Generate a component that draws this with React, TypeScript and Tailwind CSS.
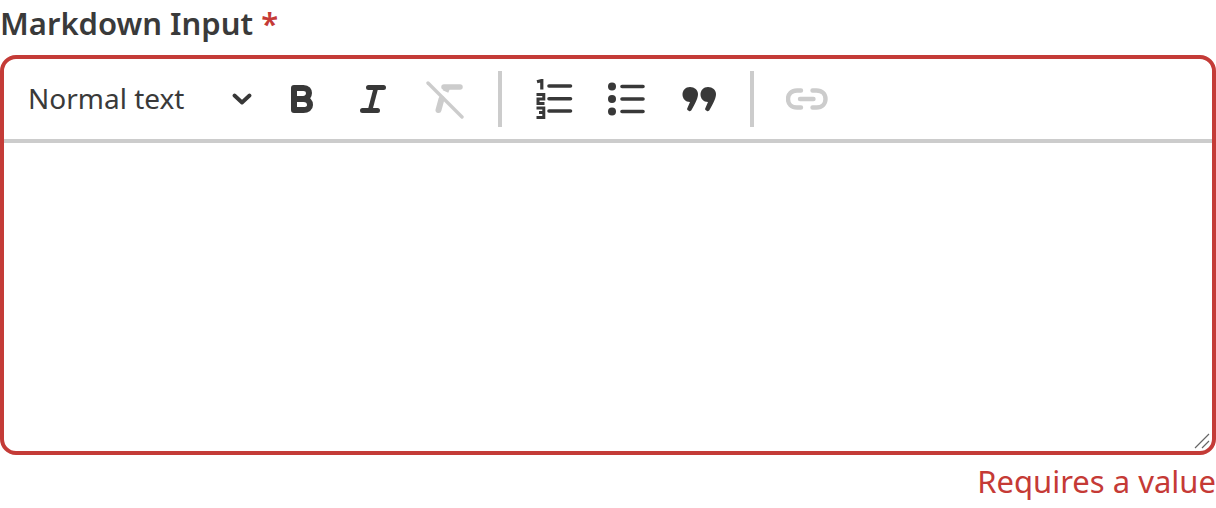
export default function App() {
  const dark = "#383838";
  const light = "#cccccc";
  return (
    <div className="w-[1216px] h-[508px] bg-white overflow-hidden font-['Noto_Sans',sans-serif]">
      <div className="h-[55px] flex items-start text-[31px] leading-[47px] font-semibold text-[#3a3a3a] whitespace-pre">
        Markdown Input <span className="text-[#c53a36]">*</span>
      </div>
      <div className="relative h-[400px] border-4 border-[#c43b37] rounded-2xl flex flex-col">
        <div className="h-[80px] flex items-center">
          <div className="w-[262px] pl-[24px] pr-[14px] flex items-center justify-between text-[28px] leading-[38px] text-[#3a3a3a]">
            <span className="-mt-[2px]">Normal text</span>
            <svg width="20" height="12" viewBox="0 0 20 12" fill="none">
              <path d="M2.5 2.5 L10 9.5 L17.5 2.5" stroke={dark} strokeWidth="3.8" strokeLinecap="round" strokeLinejoin="round" />
            </svg>
          </div>
          <div className="w-[72px] flex justify-center">
            <svg width="22" height="28" viewBox="0 0 22 28" fill="none">
              <path d="M3 3 H12.5 C16.5 3 18 5.5 18 8 C18 11 16 13.5 12.5 14 C17 14 19 17 19 20 C19 23 16.5 25 12.5 25 H3 Z M3 14 H12.5" stroke={dark} strokeWidth="6" strokeLinejoin="round" />
            </svg>
          </div>
          <div className="w-[72px] flex justify-center">
            <svg width="26" height="28" viewBox="0 0 26 28" fill="none" className="-ml-[3px]">
              <path d="M8.5 2.5 H23.5 M2.5 25.5 H17.5" stroke={dark} strokeWidth="5" strokeLinecap="round" />
              <path d="M16 2.5 L10 25.5" stroke={dark} strokeWidth="4.6" />
            </svg>
          </div>
          <div className="w-[72px] flex justify-center">
            <svg width="38" height="38" viewBox="0 0 38 38" fill="none" className="mt-[2px] -ml-[2px]">
              <path d="M2 2 L36 36" stroke={light} strokeWidth="3.4" strokeLinecap="round" />
              <path d="M18 6 H34" stroke={light} strokeWidth="5.5" strokeLinecap="round" />
              <path d="M21 7 L19.5 10.5" stroke={light} strokeWidth="6" />
              <path d="M15.5 18 L12.5 29" stroke={light} strokeWidth="6" strokeLinecap="round" />
            </svg>
          </div>
          <div className="w-1 h-[56px] bg-[#cccccc] ml-[16px]" />
          <div className="ml-[34px] w-[38px] flex">
            <svg width="38" height="40" viewBox="0 0 38 40" fill="none">
              <path d="M13 7 H34.5 M13 19.7 H34.5 M13 32 H34.5" stroke={dark} strokeWidth="3.6" strokeLinecap="round" />
              <path d="M1 2.8 L5.8 1.5 V10.5" stroke={dark} strokeWidth="3.2" />
              <path d="M0.5 15.5 H7.8 V20 H2 V24.5 H8.5" stroke={dark} strokeWidth="3" />
              <path d="M0.5 29 H7.8 V33.5 H3 M7.8 33.5 V38.5 H0.5" stroke={dark} strokeWidth="3" />
            </svg>
          </div>
          <div className="ml-[33px] w-[38px] flex">
            <svg width="38" height="34" viewBox="0 0 38 34" fill="none">
              <circle cx="5" cy="4.5" r="4" fill={dark} />
              <circle cx="5" cy="17" r="4" fill={dark} />
              <circle cx="5" cy="29.5" r="4" fill={dark} />
              <path d="M15 4.5 H36 M15 17 H36 M15 29.5 H36" stroke={dark} strokeWidth="3.6" strokeLinecap="round" />
            </svg>
          </div>
          <div className="ml-[37px] w-[36px] flex">
            <svg width="36" height="26" viewBox="0 0 36 26" fill={dark}>
              <path d="M8 1 C12.5 1 16 4 16 8 C16 12 14 16 9.5 24 C9 25 8 25.5 7 25 L5.5 24 C5 23.5 5 23 5.2 22.5 L8 16 C3.5 16 0.5 12.5 0.5 8.5 C0.5 4.5 3.5 1 8 1 Z" />
              <path d="M26 1 C30.5 1 34 4 34 8 C34 12 32 16 27.5 24 C27 25 26 25.5 25 25 L23.5 24 C23 23.5 23 23 23.2 22.5 L26 16 C21.5 16 18.5 12.5 18.5 8.5 C18.5 4.5 21.5 1 26 1 Z" />
            </svg>
          </div>
          <div className="w-1 h-[56px] bg-[#cccccc] ml-[32px]" />
          <div className="ml-[32px] flex">
            <svg width="42" height="22" viewBox="0 0 42 22" fill="none">
              <path d="M15 2.5 H11 C5.5 2.5 2 6 2 11 C2 16 5.5 19.5 11 19.5 H15 M26.5 2.5 H30.5 C36 2.5 39.5 6 39.5 11 C39.5 16 36 19.5 30.5 19.5 H26.5 M14 11 H27.5" stroke={light} strokeWidth="4.4" strokeLinecap="round" />
            </svg>
          </div>
        </div>
        <div className="h-1 bg-[#cccccc]" />
        <div className="flex-1" />
        <svg width="16" height="16" viewBox="0 0 16 16" fill="none" className="absolute right-[2px] bottom-[2px]">
          <path d="M1 15 L15 1 M8 15 L15 8" stroke="#666666" strokeWidth="1.2" />
        </svg>
      </div>
      <div className="text-right text-[31px] leading-[52px] text-[#c53a36] whitespace-nowrap">Requires a value</div>
    </div>
  );
}
